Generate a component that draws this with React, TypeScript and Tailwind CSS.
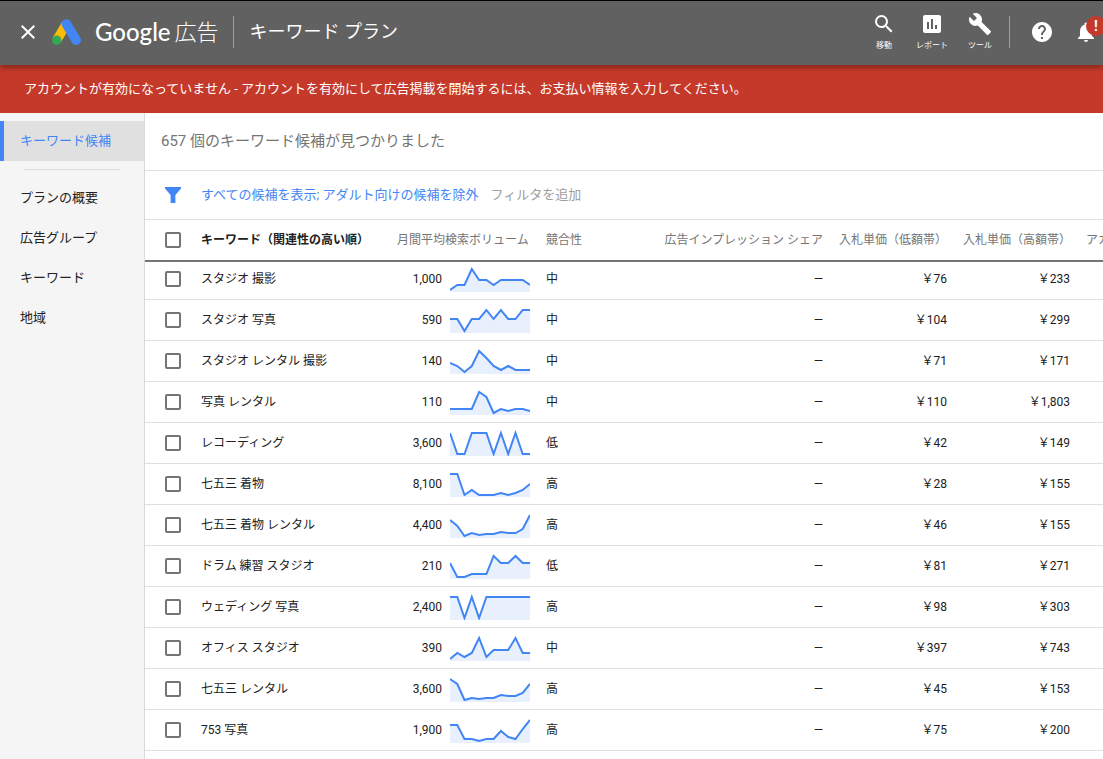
import React from 'react';
import { MdClose, MdSearch, MdInsertChart, MdBuild, MdHelp, MdNotifications } from 'react-icons/md';

type Keyword = {
  text: string;
  volume: string;
  competition: string;
  low: string;
  high: string;
  trend: number[];
};

// trend values are y positions on a 24px tall chart, one per month
const keywords: Keyword[] = [
  { text: 'スタジオ 撮影', volume: '1,000', competition: '中', low: '76', high: '233', trend: [22, 17, 17, 1, 12, 12, 17, 12, 12, 12, 12, 17] },
  { text: 'スタジオ 写真', volume: '590', competition: '中', low: '104', high: '299', trend: [10, 10, 22, 10, 10, 1, 10, 1, 10, 10, 1, 1] },
  { text: 'スタジオ レンタル 撮影', volume: '140', competition: '中', low: '71', high: '171', trend: [13, 16, 22, 16, 1, 8, 16, 20, 16, 20, 20, 20] },
  { text: '写真 レンタル', volume: '110', competition: '中', low: '110', high: '1,803', trend: [18, 18, 18, 18, 1, 6, 22, 18, 20, 18, 18, 20] },
  { text: 'レコーディング', volume: '3,600', competition: '低', low: '42', high: '149', trend: [1, 22, 22, 1, 1, 1, 22, 1, 22, 1, 22, 22] },
  { text: '七五三 着物', volume: '8,100', competition: '高', low: '28', high: '155', trend: [1, 1, 22, 17, 22, 22, 22, 20, 22, 20, 17, 11] },
  { text: '七五三 着物 レンタル', volume: '4,400', competition: '高', low: '46', high: '155', trend: [6, 12, 22, 19, 21, 20, 20, 18, 19, 19, 15, 1] },
  { text: 'ドラム 練習 スタジオ', volume: '210', competition: '低', low: '81', high: '271', trend: [8, 22, 22, 19, 19, 19, 1, 8, 8, 1, 8, 8] },
  { text: 'ウェディング 写真', volume: '2,400', competition: '高', low: '98', high: '303', trend: [1, 1, 22, 1, 22, 1, 1, 1, 1, 1, 1, 1] },
  { text: 'オフィス スタジオ', volume: '390', competition: '中', low: '397', high: '743', trend: [22, 16, 20, 16, 1, 20, 13, 13, 13, 1, 16, 16] },
  { text: '七五三 レンタル', volume: '3,600', competition: '高', low: '45', high: '153', trend: [1, 6, 22, 20, 21, 20, 20, 17, 18, 18, 15, 6] },
  { text: '753 写真', volume: '1,900', competition: '高', low: '75', high: '200', trend: [6, 6, 20, 20, 22, 20, 20, 12, 18, 20, 10, 1] },
];

const navItems = ['プランの概要', '広告グループ', 'キーワード', '地域'];

const tools = [
  { label: '移動', Icon: MdSearch },
  { label: 'レポート', Icon: MdInsertChart },
  { label: 'ツール', Icon: MdBuild },
];

function Sparkline({ trend }: { trend: number[] }) {
  const points = trend.map((y, i) => `${((i * 80) / 11).toFixed(1)},${y}`).join(' ');
  return (
    <svg width="80" height="26" viewBox="0 -2 80 26" className="shrink-0" aria-hidden="true">
      <polygon points={`0,24 ${points} 80,24`} fill="#e8f0fe" />
      <polyline points={points} fill="none" stroke="#4285f4" strokeWidth="2" />
    </svg>
  );
}

function Checkbox({ label }: { label: string }) {
  return (
    <input
      type="checkbox"
      aria-label={label}
      className="block size-4 appearance-none rounded-xs border-2 border-[#757575] bg-white checked:bg-[#4285f4]"
    />
  );
}

function AdsLogo() {
  return (
    <svg width="30" height="28" viewBox="0 0 30 28" className="shrink-0" aria-hidden="true">
      <path d="M14.3 6 4.8 22.2" stroke="#fbbc04" strokeWidth="9.4" />
      <path d="M14.4 6 24.2 22.2" stroke="#4285f4" strokeWidth="9.6" strokeLinecap="round" />
      <circle cx="4.8" cy="22.2" r="4.7" fill="#34a853" />
    </svg>
  );
}

function Header() {
  return (
    <header className="relative z-10 flex h-[65px] shrink-0 items-center border-t border-black bg-[#616161] pb-0.5 pl-4 text-white shadow-[0_2px_6px_rgba(0,0,0,0.4)]">
      <button aria-label="閉じる" className="mr-3">
        <MdClose size={24} />
      </button>
      <AdsLogo />
      <div className="ml-[13px] flex h-8 items-center gap-1 whitespace-nowrap border-r border-[#9e9e9e] pr-3.5">
        <span className="font-['Lato'] text-2xl font-medium">Google</span>
        <span className="text-[22px] font-light">広告</span>
      </div>
      <h1 className="ml-4 whitespace-nowrap text-lg">キーワード プラン</h1>

      <div className="ml-auto flex shrink-0 items-center">
        {tools.map(({ label, Icon }) => (
          <button key={label} className="flex w-12 flex-col items-center gap-1">
            <Icon size={24} />
            <span className="text-[8px] leading-3">{label}</span>
          </button>
        ))}
        <div className="ml-[5px] h-8 border-l border-[#9e9e9e]" />
        <button aria-label="ヘルプ" className="ml-5">
          <MdHelp size={24} />
        </button>
        <button aria-label="通知" className="relative ml-5 w-[29px]">
          <MdNotifications size={24} />
          <span className="absolute -top-1 left-3 flex size-5 items-center justify-center rounded-full bg-[#c5392a] text-sm font-bold">!</span>
        </button>
      </div>
    </header>
  );
}

function Sidebar() {
  return (
    <nav className="w-[145px] shrink-0 border-r border-[#dadada] bg-[#f5f5f5] pt-2 text-[13px]">
      <a href="#ideas" className="flex h-10 items-center border-l-4 border-[#4285f4] bg-[#e0e0e0] pl-4 text-[#4285f4]">
        キーワード候補
      </a>
      <hr className="mx-6 my-2 border-[#dadada]" />
      {navItems.map((item) => (
        <a key={item} href="#plan" className="flex h-10 items-center pl-5 text-[#212121]">
          {item}
        </a>
      ))}
    </nav>
  );
}

const th = 'px-2 text-left font-normal';
const td = 'border-b border-[#e0e0e0] px-2 py-3 group-first:pt-[9px]';

function KeywordTable() {
  return (
    <table className="w-[1081px] min-w-full table-fixed border-separate border-spacing-0 whitespace-nowrap text-xs leading-4">
      <colgroup>
        <col className="w-12" />
        <col className="w-[196px]" />
        <col className="w-[149px]" />
        <col className="w-[117px]" />
        <col className="w-[176px]" />
        <col className="w-[124px]" />
        <col className="w-[123px]" />
        <col className="w-[148px]" />
      </colgroup>
      <thead>
        <tr className="h-[42px] text-[#757575] [&>th]:border-b-2 [&>th]:border-[#757575]">
          <th className="pl-5"><Checkbox label="すべて選択" /></th>
          <th className="px-2 text-left font-bold text-[#212121]">キーワード（関連性の高い順）</th>
          <th className={th}>月間平均検索ボリューム</th>
          <th className={th}>競合性</th>
          <th className="px-2 text-right font-normal">広告インプレッション シェア</th>
          <th className={th}>入札単価（低額帯）</th>
          <th className={th}>入札単価（高額帯）</th>
          <th className={th}>アカウントのステータス</th>
        </tr>
      </thead>
      <tbody className="text-[#212121]">
        {keywords.map((k) => (
          <tr key={k.text} className="group">
            <td className="border-b border-[#e0e0e0] py-3 pl-5 group-first:pt-[9px]"><Checkbox label={k.text} /></td>
            <td className={td}>{k.text}</td>
            <td className={td}>
              <div className="flex h-4 items-center justify-end gap-2">
                {k.volume}
                <Sparkline trend={k.trend} />
              </div>
            </td>
            <td className={td}>{k.competition}</td>
            <td className={`${td} text-right`}>—</td>
            <td className={`${td} text-right`}>￥{k.low}</td>
            <td className={`${td} text-right`}>￥{k.high}</td>
            <td className={td} />
          </tr>
        ))}
      </tbody>
    </table>
  );
}

export default function App() {
  return (
    <div className="flex h-screen flex-col overflow-hidden bg-white font-['Roboto','Noto_Sans_CJK_JP',sans-serif]">
      <Header />
      <div role="alert" className="flex h-12 shrink-0 items-center bg-[#c5392a] px-6 text-[13px] text-white">
        アカウントが有効になっていません - アカウントを有効にして広告掲載を開始するには、お支払い情報を入力してください。
      </div>
      <div className="flex min-h-0 flex-1">
        <Sidebar />
        <main className="min-w-0 flex-1 overflow-hidden">
          <h2 className="flex h-[58px] items-center border-b border-[#e0e0e0] px-4 text-[15px] text-[#757575]">
            657 個のキーワード候補が見つかりました
          </h2>
          <div className="flex h-[49px] items-center border-b border-[#e0e0e0] pl-5 text-[13px]">
            <svg width="16" height="16" viewBox="0 0 16 16" fill="#4285f4" className="mr-5" aria-hidden="true">
              <path d="M0 0h16v1.6L10.4 8v8H5.6V8L0 1.6z" />
            </svg>
            <button className="mr-3 text-[#4285f4]">すべての候補を表示; アダルト向けの候補を除外</button>
            <button className="text-[#9e9e9e]">フィルタを追加</button>
          </div>
          <KeywordTable />
        </main>
      </div>
    </div>
  );
}
